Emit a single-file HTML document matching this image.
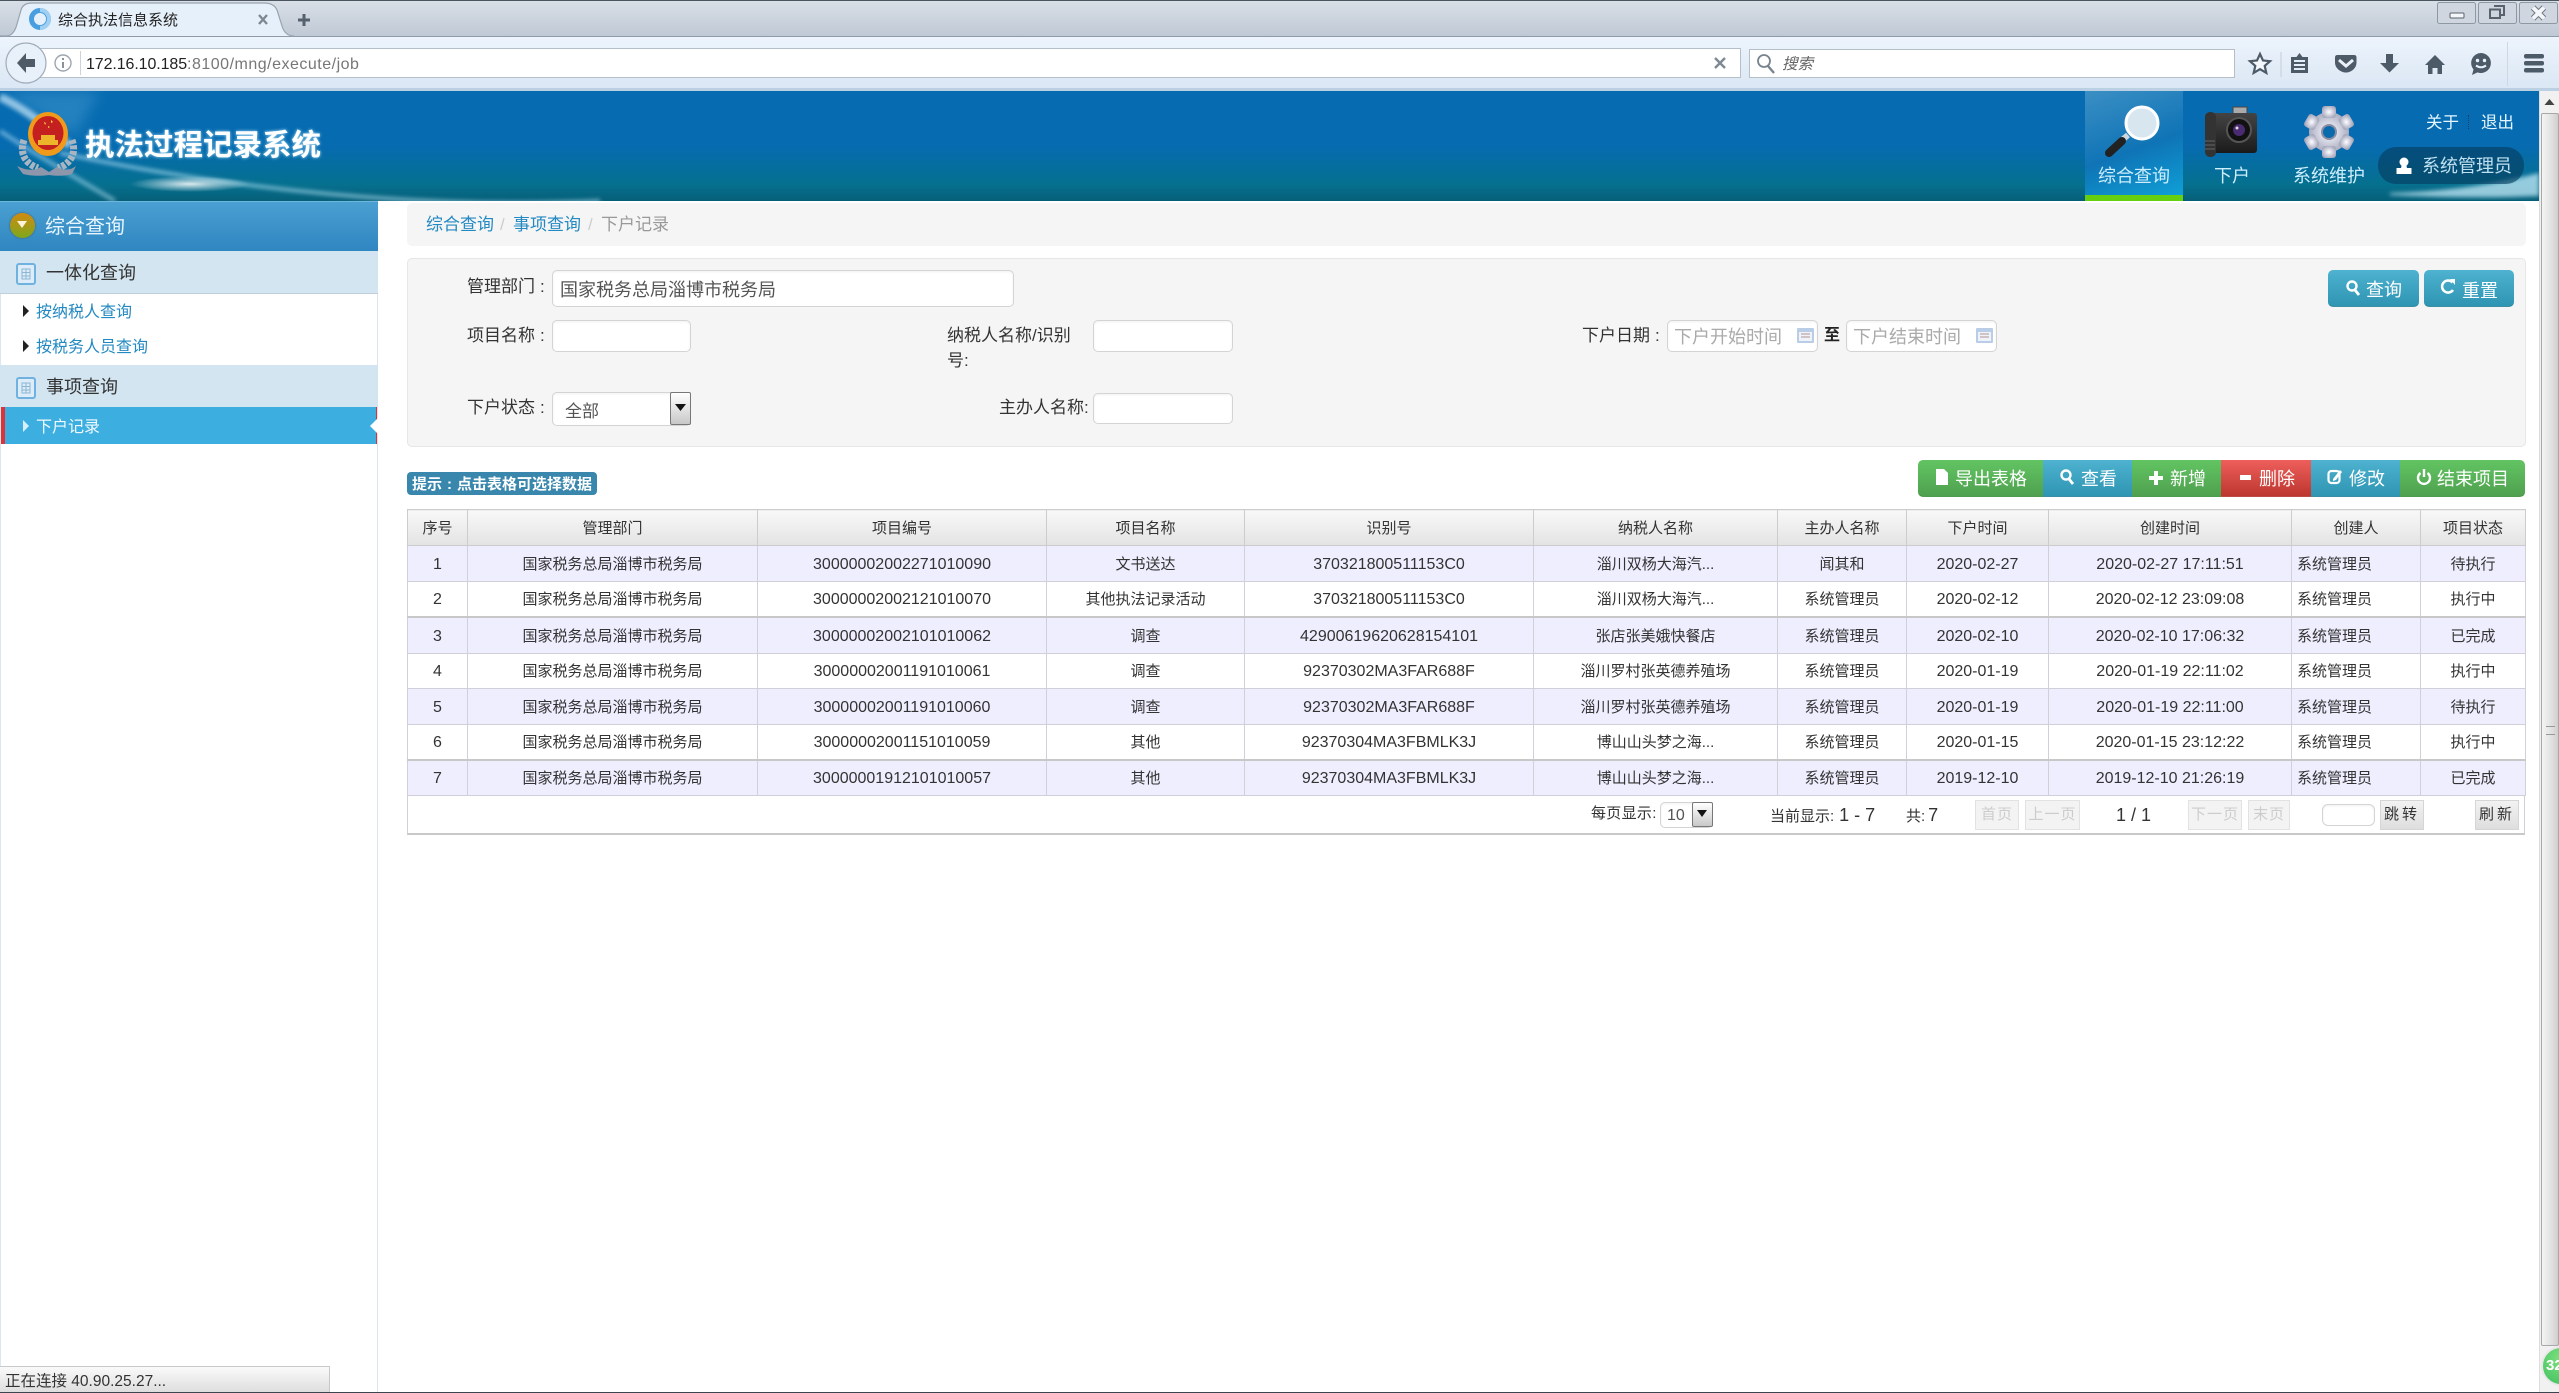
<!DOCTYPE html>
<html lang="zh"><head><meta charset="utf-8"><title>综合执法信息系统</title>
<style>
html,body{margin:0;padding:0;width:2559px;height:1393px;overflow:hidden;background:#fff}
body{position:relative;font-family:"Liberation Sans","Noto Sans CJK SC",sans-serif;color:#333}
.a,.t,svg.a{position:absolute}
.t{white-space:nowrap;margin-top:1px}
.lb{font-size:17px;line-height:30px;height:30px;color:#333}
.lb i{font-style:normal;margin-left:5px}
.inp{position:absolute;background:#fff;border:1px solid #d4d4d4;border-radius:5px;box-sizing:border-box;box-shadow:inset 0 1px 2px rgba(0,0,0,.06)}
.btn{position:absolute;box-sizing:border-box;color:#fff;font-size:18px;border-bottom:1px solid rgba(0,0,0,.2)}
.blue{background:linear-gradient(#4eb2d0,#2e95b3)}
.green{background:linear-gradient(#62c462,#4fa14f)}
.red{background:linear-gradient(#ee5f5b,#bd362f)}
.btn span{position:absolute;white-space:nowrap;line-height:26px;height:26px;margin-top:1px}
.btn svg{position:absolute}
table{position:absolute;left:407px;top:509px;width:2118px;border-collapse:collapse;table-layout:fixed;font-size:15px;color:#333}
th{height:32px;padding:3px 0 0;font-weight:normal;background:linear-gradient(#f8f8f8,#e3e3e3);border:1px solid #ccc;line-height:30px}
td{height:33px;padding:2px 0 0;text-align:center;border:1px solid #d0d0da;line-height:30px;white-space:nowrap}
tr.o td{background:#eeeeff}
td.n{font-size:16px}
td.l{text-align:left;padding-left:5px}
tr.b td{border-bottom:2px solid #c8c8c8}
tr.s td{height:32px}
.pg{position:absolute;box-sizing:border-box;top:800px;height:30px;border:1px solid #e2e2e2;background:#f3f3f3;color:#ccc;font-size:15px;text-align:center;line-height:28px;letter-spacing:1px;white-space:nowrap}
.pg.on{background:linear-gradient(#f2f2f2,#dedede);color:#333;border-color:#d5d5d5;letter-spacing:3px}
</style></head><body>

<!-- browser chrome -->
<div class="a" style="left:0;top:0;width:2559px;height:37px;background:linear-gradient(#d9dfe7,#bfc9d5);border-top:1px solid #4c5661;box-sizing:border-box;border-bottom:1px solid #8f9aa6"></div>
<svg class="a" style="left:0;top:0" width="340" height="40"><path d="M0 36 H6 Q14 36 17 24 L21 10 Q23 3 32 3 H264 Q274 3 277 10 L282 26 Q285 36 294 36" fill="#e6f0fb" stroke="#97a3af" stroke-width="1.2"/><rect x="0" y="36" width="3" height="1" fill="#8f9aa6"/><circle cx="40" cy="19" r="8.5" fill="none" stroke="#4a9ee0" stroke-width="5"/><path d="M40 10a9 9 0 0 1 0 18" fill="none" stroke="#9fd0f2" stroke-width="4"/><path d="M259 15l8 9M267 15l-8 9" stroke="#7e8994" stroke-width="2.4"/><path d="M298 20h12M304 14v12" stroke="#55616d" stroke-width="3"/></svg>
<div class="t" style="left:58px;top:6px;font-size:15px;line-height:28px;color:#222">综合执法信息系统</div>

<div class="a" style="left:0;top:37px;width:2559px;height:54px;background:linear-gradient(#edf4fc,#dbe7f4);border-bottom:3px solid #bcd0e4;box-sizing:border-box"></div>
<div class="a" style="left:40px;top:48px;width:1701px;height:30px;background:#fff;border:1px solid #b4bfca;box-sizing:border-box"></div>
<svg class="a" style="left:5px;top:42px" width="90" height="44"><circle cx="21" cy="21" r="20" fill="#e8f0f9" stroke="#a0acb9" stroke-width="1.2"/><path d="M21 11l-9 10 9 10v-6h9v-8h-9z" fill="#4f5b67"/><circle cx="58" cy="21" r="8" fill="none" stroke="#9ca6b0" stroke-width="1.4"/><path d="M58 20v6M58 16v2" stroke="#7b8792" stroke-width="1.8"/><path d="M75.500 9v24" stroke="#ccd3da"/></svg>
<div class="t" style="left:86px;top:49px;font-size:16px;line-height:30px;letter-spacing:-.1px;color:#222">172.16.10.185<span style="color:#777;letter-spacing:.5px">:8100/mng/execute/job</span></div>
<svg class="a" style="left:1710px;top:52px" width="20" height="22"><path d="M5 6l10 10M15 6L5 16" stroke="#7e8994" stroke-width="2.4"/></svg>
<div class="a" style="left:1749px;top:49px;width:486px;height:29px;background:#fff;border:1px solid #b4bfca;box-sizing:border-box"></div>
<svg class="a" style="left:1755px;top:52px" width="24" height="24"><circle cx="9" cy="9" r="6" fill="none" stroke="#78838e" stroke-width="1.8"/><path d="M13 14l6 7" stroke="#78838e" stroke-width="2.4"/></svg>
<div class="t" style="left:1782px;top:49px;font-size:15.500px;line-height:30px;font-style:italic;color:#666">搜索</div>

<svg class="a" style="left:2245px;top:42px" width="314" height="44" fill="#4d5a68">
<path d="M15 12l3 6.500 7 .7-5.300 4.700 1.600 7-6.300-3.700-6.300 3.700 1.600-7-5.300-4.700 7-.7z" fill="#f4f7fb" stroke="#4d5a68" stroke-width="2.200"/>
<path d="M36 10v25" stroke="#c3ced9"/>
<path d="M54.500 11l3 4h5.500v16H46V15h5.500zM49 18v2h11v-2zM49 22v2h11v-2zM49 26v2h11v-2z" fill-rule="evenodd"/>
<path d="M92 13h17q2.500 0 2.500 2.500v5c0 6-5.500 10-10.500 10s-11-4-11-10v-5q0-2.500 2.500-2.500z"/><path d="M94 18l7 6 7-6" fill="none" stroke="#eaf1f9" stroke-width="3"/>
<path d="M141 12h7v9h6l-9.500 9.500-9.500-9.500h6z"/>
<path d="M190 13l10 10h-3v9h-4.500v-6h-5v6H183v-9h-3z"/>
<path d="M236 11a10 10 0 1 1-3.500 19.400l-5.500 2.600 1.500-5.500a10 10 0 0 1 7.500-16.500z"/><circle cx="232.500" cy="18.500" r="1.700" fill="#eaf1f9"/><circle cx="239.500" cy="18.500" r="1.700" fill="#eaf1f9"/><path d="M231 23.500q5 3.500 10 0" stroke="#eaf1f9" stroke-width="2" fill="none"/>
<path d="M262.500 0v44" stroke="#cdd8e3"/>
<rect x="279" y="12" width="20" height="4.500" rx="2"/><rect x="279" y="19" width="20" height="4.500" rx="2"/><rect x="279" y="26" width="20" height="4.500" rx="2"/>
</svg>
<!-- window controls -->
<svg class="a" style="left:2436px;top:0" width="123" height="26"><g fill="#cfd6df" stroke="#8d98a3"><rect x="1.500" y="2.500" width="38" height="21" rx="2"/><rect x="42.500" y="2.500" width="38" height="21" rx="2"/><rect x="83.500" y="2.500" width="38" height="21" rx="2"/></g><rect x="14" y="13" width="14" height="5" rx="1" fill="#f4f6f9" stroke="#58636e"/><path d="M58 6h10v9h-3M54 9.500h10V18H54z" fill="none" stroke="#58636e" stroke-width="2"/><path d="M97 7.500l11 11M108 7.500L97 18.500" stroke="#6d7883" stroke-width="6"/><path d="M97 7.500l11 11M108 7.500L97 18.500" stroke="#f4f6f9" stroke-width="4"/></svg>

<!-- header -->
<div class="a" style="left:0;top:91px;width:2539px;height:110px;background:linear-gradient(#066bb1 0%,#066bb0 50%,#06708f 85%,#065f78 100%);overflow:hidden">
<svg class="a" style="left:0;top:0" width="2539" height="110"><defs><filter id="f1"><feGaussianBlur stdDeviation="2"/></filter><filter id="f2"><feGaussianBlur stdDeviation="7"/></filter><radialGradient id="rg"><stop offset="0" stop-color="#fff" stop-opacity=".85"/><stop offset="1" stop-color="#fff" stop-opacity="0"/></radialGradient></defs>
<path d="M0 0L75 45 100 0z" fill="#7fc4ea" opacity=".25" filter="url(#f2)"/>
<path d="M0 6Q30 20 70 55" stroke="#d8f0ff" stroke-width="8" fill="none" opacity=".65" filter="url(#f1)"/>
<path d="M0 40Q30 60 115 110" stroke="#bde6fa" stroke-width="4" fill="none" opacity=".55" filter="url(#f1)"/>
<path d="M60 62Q190 90 330 103T600 110" stroke="#bfeafc" stroke-width="3" fill="none" opacity=".7" filter="url(#f1)"/>
<ellipse cx="190" cy="93" rx="60" ry="8" fill="url(#rg)"/>
<path d="M2390 102Q2470 100 2539 82V105Q2470 108 2390 104z" fill="#d0f2ff" opacity=".7" filter="url(#f1)"/>
<!-- emblem -->
<g transform="translate(0,-91)">
<path d="M24 140c-5 14 2 24 14 28M72 140c5 14-2 24-14 28" stroke="#a8b6c4" stroke-width="7" fill="none" stroke-dasharray="4 1.500"/>
<path d="M17 166q14 7 24 1l8 5 8-5q10 6 19-1l-4 8q-10 3-23 1-14 2-26-1z" fill="#8e96ab"/>
<ellipse cx="48" cy="134" rx="20" ry="22" fill="#f09a1c"/><ellipse cx="48" cy="133" rx="15.500" ry="17" fill="#c3201f"/>
<path d="M38 140h20v5H38zM41 135h14v5H41z" fill="#edb62a"/><path d="M44 122l2 1-1 2zM51 120l2 2-2 1zM48 126l2 1-2 1z" fill="#ffd84a"/>
</g></svg>
<div class="t" style="left:85px;top:32px;font-size:29.500px;line-height:44px;font-weight:bold;color:#fff;text-shadow:0 0 3px rgba(190,235,255,.9)">执法过程记录系统</div>
</div>

<!-- nav -->
<div class="a" style="left:2085px;top:91px;width:98px;height:104px;background:linear-gradient(160deg,#3c8fc4,#0f74b6 55%,#0f9fd6)"></div>
<div class="a" style="left:2085px;top:195px;width:98px;height:6px;background:#66cf10"></div>
<svg class="a" style="left:2085px;top:91px" width="300" height="85">
<defs><radialGradient id="g1" cx=".5" cy=".5" r=".55"><stop offset="0" stop-color="#fff"/><stop offset=".5" stop-color="#d0d2e0"/><stop offset="1" stop-color="#a5a7ba"/></radialGradient><linearGradient id="cam" x1="0" y1="0" x2="0" y2="1"><stop offset="0" stop-color="#444"/><stop offset="1" stop-color="#1a1a1a"/></linearGradient></defs>
<path d="M43 44l-7 6" stroke="#cfd6dc" stroke-width="6"/><path d="M37 50L24 62" stroke="#222" stroke-width="8" stroke-linecap="round"/>
<circle cx="57" cy="32" r="16" fill="#d8e6ef" stroke="#fff" stroke-width="3"/>
<rect x="148" y="16" width="14" height="7" fill="#aaa" stroke="#444"/><rect x="120" y="22" width="52" height="40" rx="3" fill="url(#cam)"/><rect x="120" y="21" width="11" height="45" rx="5" fill="#333"/>
<circle cx="154" cy="39" r="12" fill="#111" stroke="#555" stroke-width="2"/><circle cx="154" cy="39" r="6" fill="#4a2a70"/><circle cx="152" cy="37" r="1.500" fill="#ddd"/>
<path d="M120 50h10M120 54h10M120 58h10" stroke="#666"/>
<g transform="translate(244,41)" fill="url(#g1)"><circle r="20"/><rect x="-7" y="-26" width="14" height="12" rx="3"/><rect x="-7" y="-26" width="14" height="12" rx="3" transform="rotate(60)"/><rect x="-7" y="-26" width="14" height="12" rx="3" transform="rotate(120)"/><rect x="-7" y="-26" width="14" height="12" rx="3" transform="rotate(180)"/><rect x="-7" y="-26" width="14" height="12" rx="3" transform="rotate(240)"/><rect x="-7" y="-26" width="14" height="12" rx="3" transform="rotate(300)"/></g><circle cx="244" cy="41" r="7" fill="#0a6bac" stroke="#8c8ea3" stroke-width="2"/>
</svg>
<div class="t" style="left:2098px;top:160px;font-size:18px;line-height:30px;color:#cdeefc">综合查询</div>
<div class="t" style="left:2214px;top:160px;font-size:18px;line-height:30px;color:#cdeefc">下户</div>
<div class="t" style="left:2293px;top:160px;font-size:18px;line-height:30px;color:#cdeefc">系统维护</div>
<div class="t" style="left:2426px;top:107px;font-size:16.500px;line-height:30px;color:#e6f6ff">关于</div>
<div class="a" style="left:2468px;top:115px;width:1px;height:14px;border-left:1px dotted #0a3f70"></div>
<div class="t" style="left:2481px;top:107px;font-size:16.500px;line-height:30px;color:#e6f6ff">退出</div>
<div class="a" style="left:2378px;top:147px;width:146px;height:37px;border-radius:18px;background:rgba(5,60,95,.62)"></div>
<svg class="a" style="left:2394px;top:156px" width="20" height="20"><circle cx="10" cy="6" r="4.500" fill="#fff"/><path d="M8 8h4l1 4h4.500v6H2.500v-6H7z" fill="#fff"/></svg>
<div class="t" style="left:2422px;top:150px;font-size:18px;line-height:30px;color:#bfe0f0">系统管理员</div>

<!-- scrollbar -->
<div class="a" style="left:2539px;top:91px;width:20px;height:1301px;background:#f1f1f1;border-left:1px solid #ddd;box-sizing:border-box"></div>
<svg class="a" style="left:2540px;top:95px" width="19" height="16"><path d="M4.500 10l5-6 5 6z" fill="#444"/></svg>
<div class="a" style="left:2541px;top:113px;width:18px;height:1233px;background:linear-gradient(90deg,#f4f4f4,#e4e4e4 50%,#cfcfcf);border:1px solid #a8a8a8;box-sizing:border-box;border-radius:2px"></div>
<div class="a" style="left:2546px;top:726px;width:9px;height:7px;border-top:1px solid #999;border-bottom:1px solid #999"></div>
<div class="a" style="left:2541px;top:1346px;width:40px;height:40px;border-radius:50%;background:radial-gradient(circle at 50% 30%,#7ee07e,#3fc060);border:2px solid #e8e8e8;box-sizing:border-box"></div>
<div class="t" style="left:2546px;top:1354px;font-size:15px;line-height:22px;font-weight:bold;color:#fff;width:13px;overflow:hidden">32</div>

<!-- sidebar -->
<div class="a" style="left:0;top:201px;width:378px;height:1191px;border-left:1px solid #dbe7ef;border-right:1px solid #dbe5ec;box-sizing:border-box"></div>
<div class="a" style="left:0;top:201px;width:378px;height:50px;background:linear-gradient(#4aa0d1,#2f86c1);border-top:1px solid #6db6de;box-sizing:border-box"></div>
<div class="a" style="left:10px;top:213px;width:25px;height:25px;border-radius:50%;background:linear-gradient(#d08a10,#7ea81c);box-shadow:0 0 2px #555"></div>
<svg class="a" style="left:16px;top:220px" width="12" height="10"><path d="M1 1h10L6 8z" fill="#fff4d8"/></svg>
<div class="t" style="left:45px;top:210px;font-size:20px;line-height:32px;color:#e6f5ff">综合查询</div>

<div class="a" style="left:0;top:251px;width:378px;height:43px;background:#d3e5f0;border-bottom:1px solid #bfd0dc;box-sizing:border-box"></div>
<svg class="a" style="left:16px;top:263px" width="20" height="22"><rect x="1" y="1" width="18" height="20" rx="2" fill="#dcecf8" stroke="#6fb2e0" stroke-width="2"/><path d="M6 6h8v10H6zM6 9.500h8M6 13h8M10 6v10" stroke="#8cb6d5" fill="none"/></svg>
<div class="t" style="left:46px;top:257px;font-size:18px;line-height:30px;color:#333">一体化查询</div>
<svg class="a" style="left:22px;top:304px" width="8" height="60" fill="#222"><path d="M1 1l6 6-6 6zM1 36l6 6-6 6z"/></svg>
<div class="t" style="left:36px;top:297px;font-size:16px;line-height:30px;color:#2389c2">按纳税人查询</div>
<div class="t" style="left:36px;top:332px;font-size:16px;line-height:30px;color:#2389c2">按税务人员查询</div>

<div class="a" style="left:0;top:365px;width:378px;height:42px;background:#d3e5f0"></div>
<svg class="a" style="left:16px;top:377px" width="20" height="22"><rect x="1" y="1" width="18" height="20" rx="2" fill="#dcecf8" stroke="#6fb2e0" stroke-width="2"/><path d="M6 6h8v10H6zM6 9.500h8M6 13h8M10 6v10" stroke="#8cb6d5" fill="none"/></svg>
<div class="t" style="left:46px;top:371px;font-size:18px;line-height:30px;color:#333">事项查询</div>
<div class="a" style="left:1px;top:407px;width:376px;height:37px;background:#3caee0;border-left:4px solid #dd3338;border-right:1px solid #dd3338;box-sizing:border-box"></div>
<svg class="a" style="left:22px;top:419px" width="8" height="14"><path d="M1 1l6 6-6 6z" fill="#d7effa"/></svg>
<svg class="a" style="left:370px;top:418px" width="8" height="16"><path d="M8 0v16L0 8z" fill="#fff"/></svg>
<div class="t" style="left:36px;top:412px;font-size:16px;line-height:30px;color:#f0faff">下户记录</div>

<div class="a" style="left:0;top:1366px;width:330px;height:26px;background:linear-gradient(#fafafa,#dedede);border:1px solid #c8c8c8;border-width:1px 1px 0 0;box-sizing:border-box"></div>
<div class="t" style="left:5px;top:1367px;font-size:15.500px;line-height:27px;color:#333">正在连接 40.90.25.27...</div>
<div class="a" style="left:0;top:1392px;width:2559px;height:1px;background:#3a4550"></div>

<!-- breadcrumb -->
<div class="a" style="left:407px;top:203px;width:2119px;height:43px;background:#f5f5f5;border-radius:5px"></div>
<div class="t" style="left:426px;top:209px;font-size:17px;line-height:30px;color:#2389c2">综合查询</div>
<div class="t" style="left:500px;top:209px;font-size:17px;line-height:30px;color:#ccc">/</div>
<div class="t" style="left:513px;top:209px;font-size:17px;line-height:30px;color:#2389c2">事项查询</div>
<div class="t" style="left:588px;top:209px;font-size:17px;line-height:30px;color:#ccc">/</div>
<div class="t" style="left:601px;top:209px;font-size:17px;line-height:30px;color:#999">下户记录</div>

<!-- search panel -->
<div class="a" style="left:407px;top:258px;width:2119px;height:189px;background:#f5f5f5;border:1px solid #e6e6e6;border-radius:5px;box-sizing:border-box"></div>
<div class="t lb" style="left:467px;top:271px">管理部门<i>:</i></div>
<div class="inp" style="left:552px;top:270px;width:462px;height:37px"></div>
<div class="t" style="left:560px;top:274px;font-size:18px;line-height:30px;color:#555">国家税务总局淄博市税务局</div>
<div class="t lb" style="left:467px;top:320px">项目名称<i>:</i></div>
<div class="inp" style="left:552px;top:320px;width:139px;height:32px"></div>
<div class="t lb" style="left:947px;top:320px">纳税人名称/识别</div>
<div class="t lb" style="left:947px;top:345px">号:</div>
<div class="inp" style="left:1093px;top:320px;width:140px;height:32px"></div>
<div class="t lb" style="left:1582px;top:320px">下户日期<i>:</i></div>
<div class="inp" style="left:1667px;top:320px;width:151px;height:32px"></div>
<div class="t" style="left:1674px;top:321px;font-size:18px;line-height:30px;color:#aaa">下户开始时间</div>
<div class="t" style="left:1824px;top:320px;font-size:16px;line-height:30px;font-weight:bold;color:#222">至</div>
<div class="inp" style="left:1846px;top:320px;width:151px;height:32px"></div>
<div class="t" style="left:1853px;top:321px;font-size:18px;line-height:30px;color:#aaa">下户结束时间</div>
<svg class="a" style="left:1797px;top:326px" width="200" height="20"><rect x="0" y="2" width="17" height="15" rx="1" fill="#b9cde6"/><rect x="2" y="6" width="13" height="9" fill="#eef3fa"/><path d="M4 8h9M4 11h9" stroke="#b39090"/><rect x="179" y="2" width="17" height="15" rx="1" fill="#b9cde6"/><rect x="181" y="6" width="13" height="9" fill="#eef3fa"/><path d="M183 8h9M183 11h9" stroke="#b39090"/></svg>
<div class="t lb" style="left:467px;top:392px">下户状态<i>:</i></div>
<div class="inp" style="left:552px;top:392px;width:139px;height:34px"></div>
<div class="t" style="left:565px;top:396px;font-size:17px;line-height:30px;color:#555">全部</div>
<div class="a" style="left:670px;top:392px;width:21px;height:33px;background:linear-gradient(#fff,#c8c8c8);border:1px solid #777;box-sizing:border-box;border-radius:2px"></div>
<svg class="a" style="left:675px;top:404px" width="12" height="8"><path d="M0 0h11L5.500 7z" fill="#111"/></svg>
<div class="t lb" style="left:999px;top:392px">主办人名称:</div>
<div class="inp" style="left:1093px;top:393px;width:140px;height:31px"></div>

<div class="btn blue" style="left:2328px;top:270px;width:91px;height:37px;border-radius:5px"><svg style="left:17px;top:9px" width="16" height="18"><circle cx="7" cy="7" r="4.500" fill="none" stroke="#fff" stroke-width="2.400"/><path d="M10 11l4 5" stroke="#fff" stroke-width="2.800"/></svg><span style="left:38px;top:6px">查询</span></div>
<div class="btn blue" style="left:2424px;top:270px;width:90px;height:37px;border-radius:5px"><svg style="left:16px;top:8px" width="16" height="18"><path d="M12.500 4.500A6 6 0 1 0 13 12" fill="none" stroke="#fff" stroke-width="2.500"/><path d="M10 1l5 0 0 6z" fill="#fff"/></svg><span style="left:38px;top:7px">重置</span></div>

<!-- hint -->
<div class="a" style="left:407px;top:472px;width:190px;height:23px;background:#3a87ad;border-radius:4px"></div>
<div class="t" style="left:412px;top:472px;font-size:15px;line-height:23px;font-weight:bold;color:#fff">提示<span style="margin:0 5px">:</span>点击表格可选择数据</div>

<!-- toolbar buttons -->
<div class="btn green" style="left:1918px;top:460px;width:125px;height:37px;border-radius:5px 0 0 5px"><svg style="left:17px;top:8px" width="14" height="18"><path d="M1 1h8l4 4v12H1z" fill="#fff"/></svg><span style="left:37px;top:5px">导出表格</span></div>
<div class="btn blue" style="left:2043px;top:460px;width:89px;height:37px"><svg style="left:16px;top:8px" width="16" height="18"><circle cx="7" cy="7" r="4.500" fill="none" stroke="#fff" stroke-width="2.400"/><path d="M10 11l4 5" stroke="#fff" stroke-width="2.800"/></svg><span style="left:38px;top:5px">查看</span></div>
<div class="btn green" style="left:2132px;top:460px;width:89px;height:37px"><svg style="left:16px;top:10px" width="16" height="16"><path d="M6 1h4v5h5v4h-5v5H6v-5H1V6h5z" fill="#fff"/></svg><span style="left:38px;top:5px">新增</span></div>
<div class="btn red" style="left:2221px;top:460px;width:90px;height:37px"><svg style="left:18px;top:14px" width="14" height="8"><rect x="1" y="1" width="11" height="5" fill="#fff"/></svg><span style="left:38px;top:5px">删除</span></div>
<div class="btn blue" style="left:2311px;top:460px;width:89px;height:37px"><svg style="left:16px;top:8px" width="16" height="18"><rect x="1.500" y="3" width="11" height="12" rx="3" fill="none" stroke="#fff" stroke-width="2.200"/><path d="M13 2L6 11l0 2 3-1 6-8z" fill="#fff"/></svg><span style="left:38px;top:5px">修改</span></div>
<div class="btn green" style="left:2400px;top:460px;width:125px;height:37px;border-radius:0 5px 5px 0"><svg style="left:16px;top:8px" width="16" height="18"><path d="M4.500 5a6 6 0 1 0 7 0" fill="none" stroke="#fff" stroke-width="2.400"/><path d="M8 1v8" stroke="#fff" stroke-width="2.400"/></svg><span style="left:37px;top:5px">结束项目</span></div>

<!-- table -->
<table>
<colgroup><col style="width:60px"><col style="width:290px"><col style="width:289px"><col style="width:198px"><col style="width:289px"><col style="width:244px"><col style="width:129px"><col style="width:142px"><col style="width:243px"><col style="width:129px"><col style="width:105px"></colgroup>
<tr><th>序号</th><th>管理部门</th><th>项目编号</th><th>项目名称</th><th>识别号</th><th>纳税人名称</th><th>主办人名称</th><th>下户时间</th><th>创建时间</th><th>创建人</th><th>项目状态</th></tr>
<tr class="o"><td class="n">1</td><td>国家税务总局淄博市税务局</td><td class="n">30000002002271010090</td><td>文书送达</td><td class="n">370321800511153C0</td><td>淄川双杨大海汽...</td><td>闻其和</td><td class="n">2020-02-27</td><td class="n">2020-02-27 17:11:51</td><td class="l">系统管理员</td><td>待执行</td></tr>
<tr class="b s"><td class="n">2</td><td>国家税务总局淄博市税务局</td><td class="n">30000002002121010070</td><td>其他执法记录活动</td><td class="n">370321800511153C0</td><td>淄川双杨大海汽...</td><td>系统管理员</td><td class="n">2020-02-12</td><td class="n">2020-02-12 23:09:08</td><td class="l">系统管理员</td><td>执行中</td></tr>
<tr class="o"><td class="n">3</td><td>国家税务总局淄博市税务局</td><td class="n">30000002002101010062</td><td>调查</td><td class="n">42900619620628154101</td><td>张店张美娥快餐店</td><td>系统管理员</td><td class="n">2020-02-10</td><td class="n">2020-02-10 17:06:32</td><td class="l">系统管理员</td><td>已完成</td></tr>
<tr class="s"><td class="n">4</td><td>国家税务总局淄博市税务局</td><td class="n">30000002001191010061</td><td>调查</td><td class="n">92370302MA3FAR688F</td><td>淄川罗村张英德养殖场</td><td>系统管理员</td><td class="n">2020-01-19</td><td class="n">2020-01-19 22:11:02</td><td class="l">系统管理员</td><td>执行中</td></tr>
<tr class="o"><td class="n">5</td><td>国家税务总局淄博市税务局</td><td class="n">30000002001191010060</td><td>调查</td><td class="n">92370302MA3FAR688F</td><td>淄川罗村张英德养殖场</td><td>系统管理员</td><td class="n">2020-01-19</td><td class="n">2020-01-19 22:11:00</td><td class="l">系统管理员</td><td>待执行</td></tr>
<tr class="b s"><td class="n">6</td><td>国家税务总局淄博市税务局</td><td class="n">30000002001151010059</td><td>其他</td><td class="n">92370304MA3FBMLK3J</td><td>博山山头梦之海...</td><td>系统管理员</td><td class="n">2020-01-15</td><td class="n">2020-01-15 23:12:22</td><td class="l">系统管理员</td><td>执行中</td></tr>
<tr class="o s"><td class="n">7</td><td>国家税务总局淄博市税务局</td><td class="n">30000001912101010057</td><td>其他</td><td class="n">92370304MA3FBMLK3J</td><td>博山山头梦之海...</td><td>系统管理员</td><td class="n">2019-12-10</td><td class="n">2019-12-10 21:26:19</td><td class="l">系统管理员</td><td>已完成</td></tr>
</table>
<div class="a" style="left:407px;top:795px;width:2118px;height:40px;border:1px solid #d0d0da;border-top:0;border-bottom:2px solid #c8c8c8;box-sizing:border-box"></div>

<!-- pager -->
<div class="t" style="left:1591px;top:798px;font-size:15px;line-height:30px;letter-spacing:.3px">每页显示:</div>
<div class="inp" style="left:1660px;top:802px;width:53px;height:26px"></div>
<div class="t" style="left:1667px;top:800px;font-size:16px;line-height:30px;color:#555">10</div>
<div class="a" style="left:1692px;top:802px;width:21px;height:25px;background:linear-gradient(#fff,#c8c8c8);border:1px solid #777;box-sizing:border-box;border-radius:2px"></div>
<svg class="a" style="left:1697px;top:810px" width="12" height="8"><path d="M0 0h10L5 7z" fill="#111"/></svg>
<div class="t" style="left:1770px;top:799px;font-size:15px;line-height:30px">当前显示:<span style="font-size:18px"> 1 - 7</span></div>
<div class="t" style="left:1906px;top:799px;font-size:15px;line-height:30px">共:<span style="font-size:18px;margin-left:3px">7</span></div>
<div class="pg" style="left:1975px;width:44px">首页</div>
<div class="pg" style="left:2025px;width:55px">上一页</div>
<div class="t" style="left:2116px;top:799px;font-size:18px;line-height:30px">1 / 1</div>
<div class="pg" style="left:2188px;width:54px">下一页</div>
<div class="pg" style="left:2248px;width:42px">末页</div>
<div class="inp" style="left:2322px;top:804px;width:53px;height:22px;border-radius:6px"></div>
<div class="pg on" style="left:2380px;width:44px">跳转</div>
<div class="pg on" style="left:2475px;width:44px">刷新</div>
</body></html>
